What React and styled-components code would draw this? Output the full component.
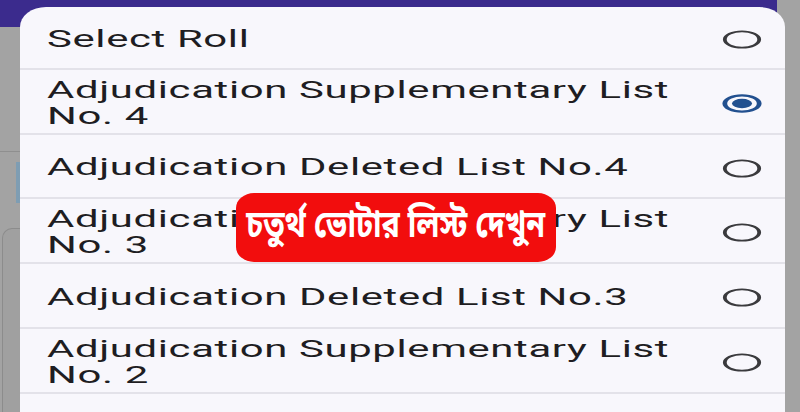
import React from "react";
import styled, { createGlobalStyle } from "styled-components";

const Global = createGlobalStyle`
  html, body { margin: 0; padding: 0; }
  body {
    width: 800px;
    height: 412px;
    overflow: hidden;
    background: #a3a3a3;
    font-family: Roboto, "Liberation Sans", sans-serif;
  }
`;

const Screen = styled.div`
  position: relative;
  width: 800px;
  height: 412px;
  overflow: hidden;
  background: #a3a3a3;
`;

const Behind = styled.div`
  display: flex;
  flex-direction: column;
  height: 100%;
`;

const TopBar = styled.div`
  flex: none;
  height: 27px;
  width: 777px;
  background: #3b2b8d;
`;

const LeftStrip = styled.div`
  flex: 1;
  width: 20px;
  display: flex;
  flex-direction: column;
`;

const HeaderBlock = styled.div`
  flex: none;
  height: 124px;
  border-bottom: 1px solid #8f8f8f;
`;

const BlueTab = styled.div`
  flex: none;
  align-self: flex-end;
  margin-top: 10px;
  width: 4px;
  height: 41px;
  background: #7e9db3;
`;

const PanelEdge = styled.div`
  flex: 1;
  margin-top: 25px;
  margin-left: 2px;
  border-left: 1px solid #8c8c8c;
  border-top: 1px solid #8c8c8c;
  border-top-left-radius: 10px;
  background: #a0a0a0;
`;

const Dialog = styled.div`
  position: absolute;
  top: 7px;
  left: 20px;
  width: 765px;
  bottom: -30px;
  background: #f8f7fc;
  border-radius: 26px 26px 0 0 / 20px 20px 0 0;
  overflow: hidden;
  display: flex;
  flex-direction: column;
`;

const List = styled.div`
  position: relative;
  display: flex;
  flex-direction: column;
`;

const Row = styled.div`
  flex: none;
  box-sizing: border-box;
  height: ${(p) => p.$h}px;
  display: flex;
  align-items: center;
  justify-content: space-between;
  padding: 4px 23px 0 27px;
  border-bottom: 2px solid #e3e2e9;
`;

const Label = styled.div`
  width: 356px;
  transform: scaleX(1.82);
  transform-origin: left center;
  font-family: Roboto, "Liberation Sans", sans-serif;
  font-size: 23px;
  line-height: 26px;
  color: #1e1d22;
  letter-spacing: 0.35px;
`;

const RadioIcon = styled.svg`
  flex: none;
  width: 40px;
  height: 19px;
  display: block;
`;

const Badge = styled.div`
  position: absolute;
  left: 216px;
  top: 186px;
  width: 320px;
  height: 69px;
  box-sizing: border-box;
  border-radius: 18px / 15px;
  background: #f20d0d;
  display: flex;
  align-items: center;
  justify-content: center;
`;

const BadgeText = styled.span`
  display: inline-block;
  transform: scaleX(0.8);
  font-family: "Noto Sans Bengali", "Noto Serif Bengali", "Lohit Bengali", "FreeSans", "Noto Sans", sans-serif;
  font-weight: 700;
  font-size: 38px;
  line-height: 42px;
  color: #ffffff;
  white-space: nowrap;
`;

function Radio({ checked }) {
  const color = checked ? "#22508f" : "#3a3a3d";
  return (
    <RadioIcon viewBox="0 0 20 20" preserveAspectRatio="none">
      <circle cx="10" cy="10" r="8.6" fill="none" stroke={color} strokeWidth={checked ? 2.4 : 1.9} />
      {checked && <circle cx="10" cy="10" r="5" fill={color} />}
    </RadioIcon>
  );
}

const items = [
  { text: "Select Roll", h: 63 },
  { text: "Adjudication Supplementary List No. 4", h: 65, checked: true },
  { text: "Adjudication Deleted List No.4", h: 64 },
  { text: "Adjudication Supplementary List No. 3", h: 65 },
  { text: "Adjudication Deleted List No.3", h: 65 },
  { text: "Adjudication Supplementary List No. 2", h: 65 },
];

export default function App() {
  return (
    <Screen>
      <Global />
      <Behind>
        <TopBar />
        <LeftStrip>
          <HeaderBlock />
          <BlueTab />
          <PanelEdge />
        </LeftStrip>
      </Behind>
      <Dialog>
        <List>
          {items.map((it, i) => (
            <Row key={i} $h={it.h}>
              <Label>{it.text}</Label>
              <Radio checked={!!it.checked} />
            </Row>
          ))}
          <Row $h={60} />
          <Badge>
            <BadgeText>চতুর্থ ভোটার লিস্ট দেখুন</BadgeText>
          </Badge>
        </List>
      </Dialog>
    </Screen>
  );
}
